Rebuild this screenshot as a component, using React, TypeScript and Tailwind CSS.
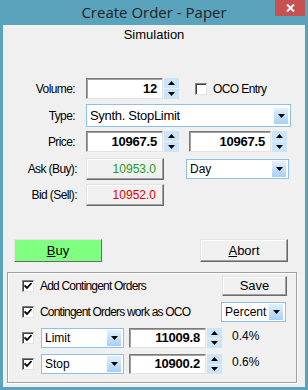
import React from 'react';

const Arrow = ({ up }: { up?: boolean }) => (
  <svg width="7" height="4" viewBox="0 0 7 4">
    <path d={up ? 'M0 4 L3.5 0 L7 4Z' : 'M0 0 L7 0 L3.5 4Z'} fill="#000" />
  </svg>
);

const Spin = () => (
  <div className="flex flex-col w-[15px] h-full ml-[1px] gap-[1px]">
    <div className="flex-1 bg-[#cce4f7] flex items-center justify-center">
      <Arrow up />
    </div>
    <div className="flex-1 bg-[#cce4f7] flex items-center justify-center">
      <Arrow />
    </div>
  </div>
);

const NumBox = ({ value, className }: { value: string; className: string }) => (
  <div className="flex h-full">
    <div
      className={`${className} bg-white border border-t-[#7a7a7a] border-l-[#7a7a7a] border-b-[#e3e3e3] border-r-[#e3e3e3] shadow-[inset_1px_1px_0_#a0a0a0] flex items-center justify-end pr-[5px] font-bold text-[13px] tracking-[-0.2px]`}
    >
      {value}
    </div>
    <Spin />
  </div>
);

const Select = ({ label, className }: { label: string; className: string }) => (
  <div className={`${className} flex items-center bg-white border border-[#8cc1ec] pl-[3px] pr-[2px]`}>
    <span className="flex-1">{label}</span>
    <div className="w-[14px] h-[16px] bg-linear-to-b from-[#e4f0fb] to-[#a6cff4] flex items-center justify-center">
      <Arrow />
    </div>
  </div>
);

const Check = ({ on }: { on?: boolean }) => (
  <div className="w-[12px] h-[12px] bg-white border border-t-[#808080] border-l-[#808080] border-b-[#e3e3e3] border-r-[#e3e3e3] shadow-[inset_1px_1px_0_#404040] flex items-center justify-center">
    {on && (
      <svg width="8" height="8" viewBox="0 0 8 8">
        <path d="M0.5 3.5 L3 6 L7.5 1" stroke="#000" strokeWidth="1.8" fill="none" />
      </svg>
    )}
  </div>
);

const RaisedBox = ({ children, className }: { children: React.ReactNode; className: string }) => (
  <div
    className={`${className} bg-[#f0f0f0] border border-t-[#e3e3e3] border-l-[#e3e3e3] border-b-[#696969] border-r-[#696969] shadow-[inset_-1px_-1px_0_#a0a0a0,inset_1px_1px_0_#ffffff] flex items-center`}
  >
    {children}
  </div>
);

export default function App() {
  return (
    <div className="w-[308px] h-[390px] bg-[#5aa3bc] flex flex-col font-['Liberation_Sans',Arial,sans-serif] text-[12px] text-black">
      {/* title bar */}
      <div className="relative h-[25px] flex items-center justify-center">
        <span className="font-['Open_Sans',sans-serif] text-[15px] text-[#222] leading-none -mt-[1px]">
          Create Order - Paper
        </span>
        <div className="absolute right-[3px] top-0 w-[30px] h-[16px] bg-[#c75050] flex items-center justify-center">
          <svg width="9" height="8" viewBox="0 0 9 8">
            <path d="M1 0.5 L8 7.5 M8 0.5 L1 7.5" stroke="#fff" strokeWidth="2" />
          </svg>
        </div>
      </div>

      {/* client */}
      <div className="mx-[3px] h-[362px] bg-[#f0f0f0] flex flex-col tracking-[-0.6px]">
        <div className="pt-[2px] text-center text-[13px] leading-[15px] tracking-normal">Simulation</div>

        {/* volume */}
        <div className="mt-[36px] h-[21px] flex items-center">
          <div className="w-[72px] text-right">Volume:</div>
          <div className="ml-[11px] h-full">
            <NumBox value="12" className="w-[77px]" />
          </div>
          <div className="ml-[16px] flex items-center gap-[6px]">
            <Check />
            <span>OCO Entry</span>
          </div>
        </div>

        {/* type */}
        <div className="mt-[5px] h-[23px] flex items-center">
          <div className="w-[72px] text-right">Type:</div>
          <Select label="Synth. StopLimit" className="ml-[11px] w-[205px] h-full text-[13px] tracking-[-0.3px]" />
        </div>

        {/* price */}
        <div className="mt-[4px] h-[21px] flex items-center">
          <div className="w-[72px] text-right">Price:</div>
          <div className="ml-[11px] h-full">
            <NumBox value="10967.5" className="w-[77px]" />
          </div>
          <div className="ml-[10px] h-full">
            <NumBox value="10967.5" className="w-[82px]" />
          </div>
        </div>

        {/* ask */}
        <div className="mt-[6px] h-[22px] flex items-center">
          <div className="w-[74px] text-right">Ask (Buy):</div>
          <RaisedBox className="ml-[9px] w-[78px] h-full justify-end pr-[7px] text-[12px] tracking-normal text-[#1a9e1a]">
            10953.0
          </RaisedBox>
          <Select label="Day" className="ml-[22px] w-[103px] h-[20px] tracking-normal" />
        </div>

        {/* bid */}
        <div className="mt-[4px] h-[22px] flex items-center">
          <div className="w-[74px] text-right">Bid (Sell):</div>
          <RaisedBox className="ml-[9px] w-[78px] h-full justify-end pr-[7px] text-[12px] tracking-normal text-[#e00000]">
            10952.0
          </RaisedBox>
        </div>

        {/* buttons */}
        <div className="mt-[33px] h-[23px] flex">
          <div className="ml-[11px] w-[88px] h-full bg-[#80ff80] border border-t-[#e3e3e3] border-l-[#e3e3e3] border-b-[#696969] border-r-[#696969] flex items-center justify-center text-[13px] tracking-normal">
            <span>
              <span className="underline">B</span>uy
            </span>
          </div>
          <RaisedBox className="ml-[98px] w-[88px] h-full justify-center text-[13px] tracking-normal">
            <span>
              <span className="underline">A</span>bort
            </span>
          </RaisedBox>
        </div>

        {/* contingent group */}
        <div className="mt-[10px] ml-[4px] w-[290px] h-[111px] border border-[#a0a0a0] shadow-[inset_1px_1px_0_#ffffff,1px_1px_0_#ffffff] flex flex-col">
          <div className="mt-[3px] h-[20px] flex items-center">
            <div className="ml-[14px]">
              <Check on />
            </div>
            <span className="ml-[6px] tracking-[-0.8px]">Add Contingent Orders</span>
            <RaisedBox className="ml-auto mr-[9px] w-[65px] h-full justify-center text-[13px] tracking-normal">
              Save
            </RaisedBox>
          </div>
          <div className="mt-[6px] h-[20px] flex items-center">
            <div className="ml-[14px]">
              <Check on />
            </div>
            <span className="ml-[6px] tracking-[-0.8px]">Contingent Orders work as OCO</span>
            <Select label="Percent" className="ml-auto mr-[10px] w-[65px] h-full text-[12px] tracking-normal" />
          </div>
          <div className="mt-[6px] h-[20px] flex items-center">
            <div className="ml-[14px]">
              <Check on />
            </div>
            <Select label="Limit" className="ml-[7px] w-[83px] h-full tracking-normal" />
            <div className="ml-[5px] h-full">
              <NumBox value="11009.8" className="w-[77px]" />
            </div>
            <span className="ml-[10px] -mt-[4px] tracking-normal">0.4%</span>
          </div>
          <div className="mt-[6px] h-[20px] flex items-center">
            <div className="ml-[14px]">
              <Check on />
            </div>
            <Select label="Stop" className="ml-[7px] w-[83px] h-full tracking-normal" />
            <div className="ml-[5px] h-full">
              <NumBox value="10900.2" className="w-[77px]" />
            </div>
            <span className="ml-[10px] -mt-[4px] tracking-normal">0.6%</span>
          </div>
        </div>
      </div>
    </div>
  );
}
